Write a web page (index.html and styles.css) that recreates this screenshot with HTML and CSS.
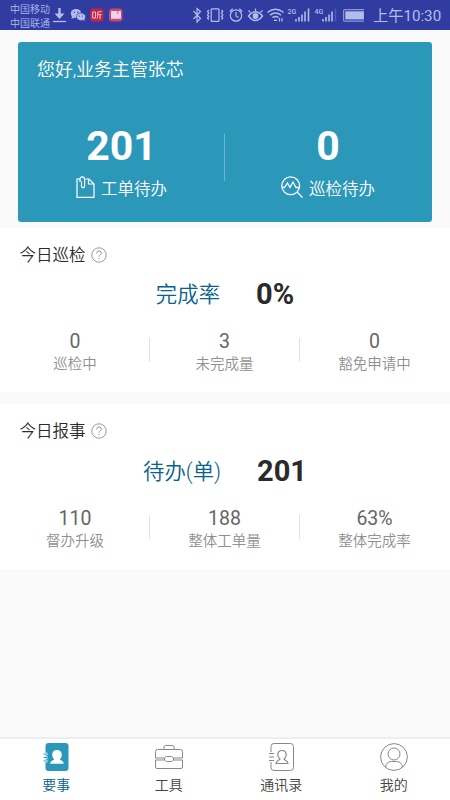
FILE: index.html
```html
<!DOCTYPE html>
<html lang="zh-CN">
<head>
<meta charset="utf-8">
<meta name="viewport" content="width=device-width, initial-scale=1">
<title>要事</title>
<link rel="stylesheet" href="styles.css">
</head>
<body>
<div class="app">
  <header class="status">
    <div class="carriers"><span>中国移动</span><span>中国联通</span></div>
    <svg class="status-icons" width="312" height="30" viewBox="0 0 312 30" fill="none" stroke="#b4bbef" stroke-width="1.2">
      <g transform="translate(-52 0)">
        <path d="M59.5 8v7" stroke-width="2.4"/><path d="M54.5 13.5h10l-5 5.500z" fill="#b4bbef" stroke="none"/><path d="M53 21.500h13" stroke-width="1.300"/>
        <ellipse cx="76" cy="13.500" rx="5.200" ry="4.600" fill="#b4bbef" stroke="none"/><path d="M72 16l-.5 3 3-1.500z" fill="#b4bbef" stroke="none"/>
        <ellipse cx="81" cy="16.800" rx="4.600" ry="3.900" fill="#b4bbef" stroke="#303c9f" stroke-width=".7"/><path d="M82 19l2.500 2-.2-3z" fill="#b4bbef" stroke="none"/>
        <g fill="#303c9f" stroke="none"><circle cx="74.300" cy="12.300" r=".7"/><circle cx="77.800" cy="12.300" r=".7"/><circle cx="79.500" cy="16" r=".6"/><circle cx="82.500" cy="16" r=".6"/></g>
        <rect x="90" y="8.500" width="13.500" height="13" rx="3" fill="#bf2548" stroke="none"/>
        <path d="M92.700 12h2.800v6h-2.800zM101.500 11.500l-3.800.6v3.900q0 2-.8 2.800M97.700 14.600h4M100 14.600v4.600" stroke="#f0c4d8" stroke-width="1"/>
        <rect x="109" y="8.500" width="13.500" height="13" rx="3" fill="#cf4672" stroke="none"/>
        <path d="M111 11h4.700l.3.500.3-.5h4.700v7.800h-4.500l-.5.500-.5-.5H111z" fill="#e9d4ec" stroke="none"/><path d="M117.800 11v3" stroke="#cf4672" stroke-width=".8"/>
        <path d="M193.500 11l7 7.500-3.500 3.500V8.500l3.500 3-7 7.500"/>
        <rect x="211.200" y="8.800" width="7.800" height="12.600" rx=".7"/><path d="M208.800 10l-1.300 1.500 1.300 1.500-1.300 2 1.300 1.500-1.300 1.500 1.300 1.500M221.500 10l1.300 1.500-1.300 1.500 1.300 2-1.300 1.500 1.300 1.500-1.300 1.500"/>
        <circle cx="236" cy="15.500" r="5.700"/><path d="M236 12v4l2.500 1.500M229.700 11.500l3-2.700M242.300 11.500l-3-2.700"/>
        <path d="M248.500 16q7-8.500 14 0-7 9-14 0z" stroke-width="1.400"/><circle cx="255.500" cy="16" r="2.900" fill="#b4bbef" stroke="none"/><path d="M255.500 11.500V8.500M250.500 12.500l-2-2M260.500 12.500l2-2"/>
        <path d="M267.500 12.500q8-6.500 16 0M270 15.200q5.500-4.500 11 0M272.500 17.700q3-2.300 6 0" stroke-width="1.500"/><path d="M274 20.300h3M279.500 18v3.500M282 21.500v-3.500" stroke-width="1.200"/>
        <path d="M296 19v2.500M299 17v4.500M302 14.500v7M305 11.500v10M308.500 8.500v13" stroke-width="1.600"/>
        <path d="M323 19v2.500M326 17v4.500M329 14.500v7M332 11.500v10" stroke-width="1.600"/><path d="M335.500 8.500v13" stroke="#505abb" stroke-width="1.400"/>
        <rect x="343.600" y="9.600" width="22" height="11.500" rx="1" stroke="#8f97d8"/><rect x="345.300" y="11.300" width="18.600" height="8.100" fill="#b4bbef" stroke="none"/><path d="M367.700 12.500v5.500" stroke-width="1.400"/>
        <g class="net" fill="#b4bbef" stroke="none"><text x="287.500" y="14">2G</text><text x="314.500" y="14">4G</text></g>
      </g>
    </svg>
    <time class="clock">上午10:30</time>
  </header>

  <main>
    <section class="hero">
      <h1>您好,业务主管张芯</h1>
      <div class="todo-grid">
        <div class="todo">
          <strong>201</strong>
          <span class="todo-label">
            <svg width="19" height="24" viewBox="0 0 19 24" fill="none" stroke="currentColor" stroke-width="1.200"><path d="M4 3H1v18.300h17V8l-5-5H9.500M12.500 3v5H18"/><path d="M4 6V3.300Q4 .8 6.300.8t2.300 2.500v6.500q0 2-1.500 2T5.500 10V5.500"/></svg>
            <span>工单待办</span>
          </span>
        </div>
        <div class="todo">
          <strong>0</strong>
          <span class="todo-label">
            <svg width="22" height="24" viewBox="0 0 22 24" fill="none" stroke="currentColor" stroke-width="1.300"><circle cx="9.700" cy="9.800" r="8.900"/><path d="M16 16l5.500 5.500M1 11.500h2.500l3-4.500 2.500 4.500L12 6l3 5.500h3"/></svg>
            <span>巡检待办</span>
          </span>
        </div>
      </div>
    </section>

    <section class="panel">
      <h2>今日巡检 <svg width="16" height="16" viewBox="0 0 16 16" fill="none" stroke="#999"><circle cx="8" cy="8" r="7.200"/><path d="M5.700 6.300q0-2.400 2.300-2.400t2.300 2.200q0 1-1.100 1.700T8 9.700M8 11v1.300"/></svg></h2>
      <div class="rate"><span>完成率</span><strong>0%</strong></div>
      <div class="stats">
        <div><b>0</b><span>巡检中</span></div>
        <div><b>3</b><span>未完成量</span></div>
        <div><b>0</b><span>豁免申请中</span></div>
      </div>
    </section>

    <section class="panel report">
      <h2>今日报事 <svg width="16" height="16" viewBox="0 0 16 16" fill="none" stroke="#999"><circle cx="8" cy="8" r="7.200"/><path d="M5.700 6.300q0-2.400 2.300-2.400t2.300 2.200q0 1-1.100 1.700T8 9.700M8 11v1.300"/></svg></h2>
      <div class="rate"><span>待办(单)</span><strong>201</strong></div>
      <div class="stats">
        <div><b>110</b><span>督办升级</span></div>
        <div><b>188</b><span>整体工单量</span></div>
        <div><b>63%</b><span>整体完成率</span></div>
      </div>
    </section>
  </main>

  <nav class="tabs">
    <a class="active">
      <svg width="28" height="28" viewBox="0 0 28 28"><rect x="3.500" y="0" width="23" height="28" rx="3" fill="#2c98b9"/><path d="M3 11h2.500M3 14.500h2.500M3 18h2.500" stroke="#fff" stroke-width="2.300"/><path d="M1.500 11h4M1.500 14.500h4M1.500 18h4" stroke="#2c98b9" stroke-width="1.200"/><path d="M15 7c3 0 4.800 2 4.800 4.700 0 2-.9 3.600-2 4.500.5 1.200 3.700 1.200 3.900 4.600H8.300c.2-3.400 3.400-3.400 3.900-4.600-1.100-.9-2-2.500-2-4.500C10.200 9 12 7 15 7z" fill="#fff"/></svg>
      要事
    </a>
    <a>
      <svg width="28" height="28" viewBox="0 0 28 28" fill="none" stroke="#888"><path d="M9 6.500V4q0-1.500 1.500-1.500h7Q19 2.500 19 4v2.500M2.500 6.500h23q2 0 2 2V15H18.500l-2-1.500h-5l-2 1.500H.5V8.500q0-2 2-2zM.5 17h9l2 1.500h5l2-1.500h9v7q0 1.500-1.500 1.500H2Q.5 25.500.5 24zM9.500 15v2M18.500 15v2"/></svg>
      工具
    </a>
    <a>
      <svg width="28" height="28" viewBox="0 0 28 28" fill="none" stroke="#888"><path d="M4 9V3.500Q4 .5 7 .5h16.500q3 0 3 3v21q0 3-3 3H7q-3 0-3-3V19M2 10.500h5M2 14h5M2 17.500h5"/><path d="M15 7.500c2.600 0 4.200 1.800 4.200 4.200 0 1.900-.9 3.300-2.200 4.300.5 1.400 3.900 1.200 4 4.500H9c.1-3.300 3.500-3.100 4-4.500-1.300-1-2.200-2.400-2.200-4.300 0-2.400 1.600-4.200 4.200-4.200z" stroke-width="1.200"/></svg>
      通讯录
    </a>
    <a>
      <svg width="28" height="28" viewBox="0 0 28 28" fill="none" stroke="#888"><circle cx="14" cy="14" r="13.400"/><circle cx="14" cy="11" r="6"/><path d="M5.500 24q1-5.500 6-5.500h5q5 0 6 5.500"/></svg>
      我的
    </a>
  </nav>
</div>
</body>
</html>
```
FILE: styles.css
```css
* {
  box-sizing: border-box;
}

body {
  margin: 0;
  font-family: Roboto, "Noto Sans CJK SC", sans-serif;
  font-weight: 350;
  color: #2a2a2a;
}

.app {
  display: flex;
  flex-direction: column;
  height: 800px;
  background: #fafafa;
}

.status {
  display: flex;
  align-items: center;
  height: 30px;
  padding-left: 10px;
  background: #303c9f;
  color: #b4bbef;
}

.carriers {
  display: flex;
  flex-direction: column;
  width: 42px;
  padding-top: 3px;
  font-size: 10px;
  line-height: 14px;
  white-space: nowrap;
}

.status-icons {
  flex: none;
}

.net {
  font-size: 7px;
  font-weight: 500;
}

.clock {
  margin-left: 9px;
  padding-top: 2px;
  font-size: 15.2px;
  font-weight: 380;
  line-height: 28px;
  white-space: nowrap;
}

main {
  flex: 1;
  padding-top: 12px;
}

.hero {
  height: 180px;
  margin: 0 18px 6px;
  padding-top: 15px;
  border-radius: 3px;
  background: #2c98b9;
  color: #fff;
}

.hero h1 {
  margin: 0 0 0 19px;
  font-size: 17.9px;
  font-weight: inherit;
  line-height: 26px;
}

.todo-grid {
  display: grid;
  grid-template-columns: 1fr 1fr;
  margin-top: 39px;
}

.todo {
  display: flex;
  flex-direction: column;
  align-items: center;
}

.todo strong {
  font-size: 41px;
  font-weight: 700;
  line-height: 48px;
}

.todo + .todo {
  background: linear-gradient(#6cb7ce, #6cb7ce) 0 12px / 1px 47px no-repeat;
  margin-left: -1px;
}

.todo-label {
  display: flex;
  align-items: center;
  gap: 6px;
  height: 24px;
  margin-top: 6px;
  font-size: 16.5px;
  line-height: 24px;
}

.todo-label span {
  padding-top: 3px;
}

.panel {
  height: 164px;
  padding-top: 16px;
  background: #fff;
}

.report {
  height: 165px;
  margin-top: 12px;
}

.panel h2 {
  display: flex;
  align-items: center;
  gap: 5px;
  margin: 0 0 0 19.5px;
  font-size: 16.5px;
  font-weight: inherit;
  line-height: 24px;
}

.panel h2 svg {
  margin-top: -2px;
}

.rate {
  display: flex;
  align-items: center;
  justify-content: center;
  gap: 36px;
  height: 32px;
  margin-top: 10px;
}

.report .rate {
  margin-top: 11px;
}

.rate span {
  margin-top: -3px;
  color: #07628c;
  font-size: 21.4px;
}

.rate strong {
  font-size: 29px;
  font-weight: 700;
}

.stats {
  display: grid;
  grid-template-columns: repeat(3, 1fr);
  margin-top: 20px;
  text-align: center;
}

.stats div {
  display: flex;
  flex-direction: column;
}

.stats div + div {
  background: linear-gradient(#e2e2e2, #e2e2e2) 0 8px / 1px 24px no-repeat;
  margin-left: -1px;
}

.stats b {
  color: #666;
  font-size: 19.5px;
  font-weight: 400;
  line-height: 24px;
}

.stats span {
  padding-top: 1px;
  color: #909090;
  font-size: 14.5px;
  line-height: 20px;
}

.tabs {
  display: grid;
  grid-template-columns: repeat(4, 1fr);
  height: 63px;
  border-top: 2px solid #eee;
  background: #fff;
}

.tabs a {
  display: flex;
  flex-direction: column;
  align-items: center;
  padding-top: 4px;
  color: #444;
  font-size: 14px;
  line-height: 20px;
}

.tabs svg {
  margin-bottom: 4px;
}

.tabs .active {
  color: #07628c;
}
```
